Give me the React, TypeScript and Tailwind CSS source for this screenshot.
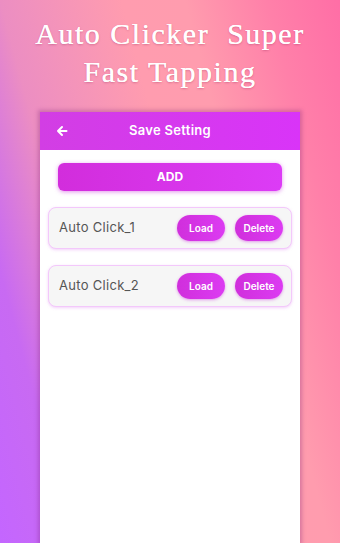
import React from 'react';

const saves = ['Auto Click_1', 'Auto Click_2'];

const PillButton = ({ label }: { label: string }) => (
    <button className="h-[26px] w-[48px] rounded-full bg-[linear-gradient(90deg,#d02fdc,#dc3bf2)] text-[10px] font-semibold text-white shadow-[0_1px_3px_rgba(200,40,220,0.45)]">
        {label}
    </button>
);

export default function App() {
    return (
        <div className="h-[543px] w-[340px] overflow-hidden bg-[linear-gradient(75deg,#c466ff_0%,#c86af2_15%,#ec8ec2_30%,#ff9caf_55%,#ff9cae_68%,#ff80a9_85%,#ff6ea6_100%)] flex flex-col items-center">
            {/* タイトル */}
            <div className="pt-[15px] text-center font-['Liberation_Serif',serif] text-[30px] leading-[38px] tracking-[1.5px] text-white [text-shadow:0_0_0.6px_white,0_1px_2px_rgba(150,40,90,0.35)]">
                <div>Auto Clicker&nbsp; Super</div>
                <div>Fast Tapping</div>
            </div>

            {/* 画面 */}
            <div className="mt-[21px] flex w-[260px] flex-1 flex-col bg-white shadow-[0_0_4px_2px_rgba(120,30,120,0.3)] font-['Inter',sans-serif]">
                <div className="relative flex h-[38px] items-center justify-center bg-[linear-gradient(90deg,#d23ee4,#d934f8)] text-white">
                    <svg className="absolute left-[16px]" width="12" height="12" viewBox="0 0 12 12" fill="none" stroke="white" strokeWidth="2" strokeLinecap="round" strokeLinejoin="round">
                        <path d="M10.5 6H2M6 2L2 6l4 4" />
                    </svg>
                    <span className="text-[13px] font-semibold tracking-[0.3px]">Save Setting</span>
                </div>

                <div className="flex flex-col px-[8px] pt-[13px]">
                    <button className="mx-[10px] h-[28px] rounded-md bg-[linear-gradient(90deg,#d22ddc,#dc3cf6)] text-[12px] font-bold text-white shadow-[0_1px_4px_rgba(200,40,220,0.5)]">
                        ADD
                    </button>

                    <div className="mt-[16px] flex flex-col gap-[16px]">
                        {saves.map((name) => (
                            <div key={name} className="flex h-[42px] items-center rounded-lg border border-[#f3c8fb] bg-[#f6f6f6] pl-[10px] pr-[8px] shadow-[0_1px_3px_rgba(220,120,240,0.35)]">
                                <span className="flex-1 text-[13px] tracking-[0.3px] text-[#555]">{name}</span>
                                <div className="flex gap-[10px]">
                                    <PillButton label="Load" />
                                    <PillButton label="Delete" />
                                </div>
                            </div>
                        ))}
                    </div>
                </div>
            </div>
        </div>
    );
}
